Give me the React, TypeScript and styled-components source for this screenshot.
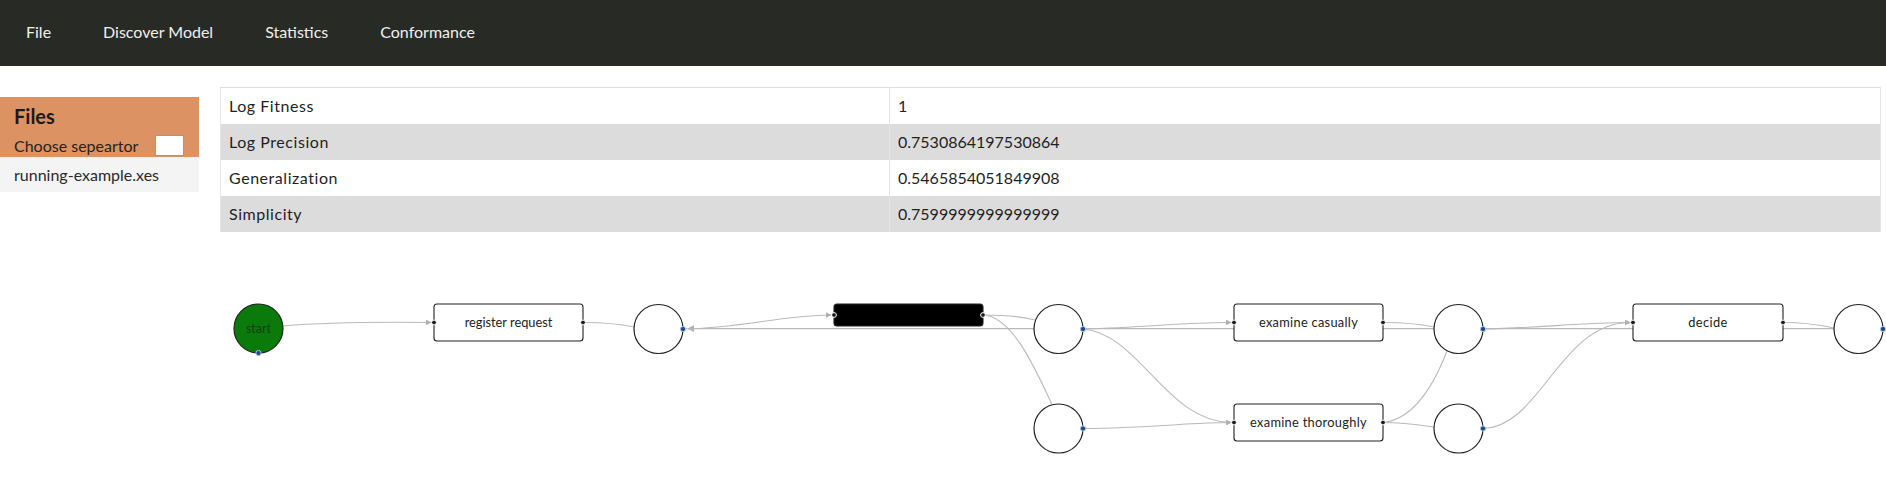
import React from "react";
import styled, { createGlobalStyle } from "styled-components";

const GlobalStyle = createGlobalStyle`
  html, body {
    margin: 0;
    padding: 0;
    height: 484px;
    overflow: hidden;
    background: #ffffff;
    font-family: Lato, "Open Sans", "Liberation Sans", sans-serif;
    color: #222;
  }
  * { box-sizing: border-box; }
`;

const Page = styled.div`
  width: 1886px;
  height: 484px;
  display: flex;
  flex-direction: column;
`;

const NavBar = styled.nav`
  height: 66px;
  background: #282a26;
  display: flex;
  align-items: center;
  padding-left: 0;
  flex-shrink: 0;
`;

const NavItem = styled.a`
  color: #f0f0ee;
  font-size: 16px;
  padding: 0 26px 0 26px;
  cursor: pointer;
  line-height: 20px;
  margin-top: -2px;
`;

const Content = styled.div`
  flex: 1;
  display: flex;
  align-items: flex-start;
  min-height: 0;
`;

const Sidebar = styled.aside`
  width: 199px;
  margin-top: 31px;
  flex-shrink: 0;
`;

const FilesPanel = styled.div`
  background: #dd9263;
  padding: 6px 12px 1px 14px;
`;

const PanelTitle = styled.h3`
  margin: 0;
  font-size: 20px;
  font-weight: 700;
  line-height: 26px;
  color: #1e1a17;
`;

const SepRow = styled.div`
  height: 27px;
  display: flex;
  align-items: flex-end;
  justify-content: space-between;
  font-size: 16px;
  line-height: 20px;
  color: #2a2320;
`;

const SepInput = styled.input`
  width: 29px;
  height: 21px;
  border: 1px solid #9a9a9a;
  background: #fff;
  padding: 0;
  margin: 0 3px 0 0;
`;

const FileItem = styled.div`
  height: 35px;
  line-height: 35px;
  padding-left: 14px;
  background: #f4f4f4;
  font-size: 16px;
  color: #2a2a2a;
`;

const Main = styled.main`
  flex: 1;
  margin-left: 21px;
  margin-right: 5px;
  display: flex;
  flex-direction: column;
  min-width: 0;
`;

const MetricsTable = styled.table`
  margin-top: 21px;
  width: 100%;
  border-collapse: collapse;
  border-top: 1px solid #dedede;
  border-left: 1px solid #e4e4e4;
  border-right: 1px solid #e4e4e4;
  font-size: 16px;
`;

const Row = styled.tr<{ $shaded: boolean }>`
  height: 36px;
  background: ${(p) => (p.$shaded ? "#dcdcdc" : "#ffffff")};
`;

const LabelCell = styled.td`
  width: 669px;
  padding: 0 8px;
  border-right: 1px solid #e4e4e4;
  color: #1f1f1f;
  letter-spacing: 0.55px;
`;

const ValueCell = styled.td`
  padding: 0 8px;
  color: #1f1f1f;
`;

const GraphView = styled.div`
  height: 252px;
  position: relative;
`;

const GraphSvg = styled.svg`
  display: block;
  overflow: visible;
  font-family: Lato, "Open Sans", "Liberation Sans", sans-serif;
`;

const metrics = [
  { label: "Log Fitness", value: "1" },
  { label: "Log Precision", value: "0.7530864197530864" },
  { label: "Generalization", value: "0.5465854051849908" },
  { label: "Simplicity", value: "0.7599999999999999" },
];

const EDGE = "#b9b9b9";

type Place = { x: number; y: number };
const R = 24.5;
const places: Place[] = [
  { x: 658.5, y: 329 },
  { x: 1058.5, y: 329 },
  { x: 1058.5, y: 428.5 },
  { x: 1458.5, y: 329 },
  { x: 1458.5, y: 428.5 },
  { x: 1858.5, y: 329 },
];

type Trans = { x: number; y: number; w: number; h: number; label?: string; silent?: boolean; ls?: number };
const transitions: Trans[] = [
  { x: 434, y: 304, w: 149, h: 37, label: "register request", ls: 0 },
  { x: 834, y: 304, w: 149, h: 22, silent: true },
  { x: 1234, y: 304, w: 149, h: 37, label: "examine casually", ls: 0.3 },
  { x: 1234, y: 404, w: 149, h: 37, label: "examine thoroughly", ls: 0.3 },
  { x: 1633, y: 304, w: 150, h: 37, label: "decide", ls: 0.4 },
];

const edges: { d: string; arrow?: boolean; w?: number }[] = [
  { d: "M1886,328.6 L688,328.6", arrow: true, w: 1.4 },
  { d: "M283,326 C330,322 390,322 431,322.5", arrow: true },
  { d: "M583,322.5 C605,322.5 620,324 634,327" },
  { d: "M683,329 C740,328 785,315 831,315", arrow: true },
  { d: "M983,315 C1005,315 1020,316 1035,320" },
  { d: "M983,315 C1012,316 1035,368 1052,404.5" },
  { d: "M1083,329 C1150,327 1190,322 1231,322.5", arrow: true },
  { d: "M1083,329 C1140,334 1165,421 1231,422.5", arrow: true },
  { d: "M1083,428.5 C1150,428 1190,422.5 1231,422.5", arrow: true },
  { d: "M1383,322.5 C1405,322.5 1420,324 1434,327" },
  { d: "M1383,422.5 C1408,420 1430,395 1447,351" },
  { d: "M1383,422.5 C1405,422.5 1420,425 1434,427" },
  { d: "M1483,329 C1540,328 1580,322.5 1630,322.5", arrow: true },
  { d: "M1483,428.5 C1540,428 1560,322.5 1630,322.5", arrow: true },
  { d: "M1783,322.5 C1805,322.5 1820,325 1834,328" },
];

const Dot = ({ x, y, blue }: { x: number; y: number; blue?: boolean }) => (
  <circle
    cx={x}
    cy={y}
    r={blue ? 2.6 : 2.4}
    fill={blue ? "#24478a" : "#1a1a1a"}
    stroke={blue ? "#a8c4ea" : "#ffffff"}
    strokeWidth={1}
  />
);

const PetriNet = () => (
  <GraphSvg width="100%" height="252" viewBox="220 232 1661 252" preserveAspectRatio="xMinYMin meet">
    <defs>
      <marker id="arr" viewBox="0 0 10 10" refX="9" refY="5" markerWidth="5" markerHeight="5" orient="auto">
        <path d="M0,0 L10,5 L0,10 z" fill="#b0b0b0" />
      </marker>
    </defs>
    {edges.map((e, i) => (
      <path
        key={i}
        d={e.d}
        fill="none"
        stroke={EDGE}
        strokeWidth={e.w ?? 1.1}
        markerEnd={e.arrow ? "url(#arr)" : undefined}
      />
    ))}
    <circle cx={258.5} cy={328.5} r={R} fill="#0a7a0a" stroke="#1c2a1c" strokeWidth={1.2} />
    <text x={258.5} y={333} textAnchor="middle" fontSize="12.5" fill="#173f17">
      start
    </text>
    <Dot x={258.5} y={353} blue />
    {places.map((p, i) => (
      <g key={i}>
        <circle cx={p.x} cy={p.y} r={R} fill="#ffffff" stroke="#222" strokeWidth={1.2} />
        <Dot x={p.x + R} y={p.y} blue />
      </g>
    ))}
    {transitions.map((t, i) => (
      <g key={i}>
        <rect
          x={t.x}
          y={t.y}
          width={t.w}
          height={t.h}
          rx={3}
          fill={t.silent ? "#000000" : "#ffffff"}
          stroke="#222"
          strokeWidth={1.1}
        />
        {t.label && (
          <text
            x={t.x + t.w / 2}
            y={t.y + t.h / 2 + 4.5}
            textAnchor="middle"
            fontSize="12.8"
            fill="#222"
            letterSpacing={t.ls}
          >
            {t.label}
          </text>
        )}
        <Dot x={t.x} y={t.y + t.h / 2} />
        <Dot x={t.x + t.w} y={t.y + t.h / 2} />
      </g>
    ))}
  </GraphSvg>
);

export default function App() {
  return (
    <>
      <GlobalStyle />
      <Page>
        <NavBar>
          <NavItem>File</NavItem>
          <NavItem>Discover Model</NavItem>
          <NavItem>Statistics</NavItem>
          <NavItem>Conformance</NavItem>
        </NavBar>
        <Content>
          <Sidebar>
            <FilesPanel>
              <PanelTitle>Files</PanelTitle>
              <SepRow>
                <span>Choose sepeartor</span>
                <SepInput type="text" />
              </SepRow>
            </FilesPanel>
            <FileItem>running-example.xes</FileItem>
          </Sidebar>
          <Main>
            <MetricsTable>
              <tbody>
                {metrics.map((m, i) => (
                  <Row key={m.label} $shaded={i % 2 === 1}>
                    <LabelCell>{m.label}</LabelCell>
                    <ValueCell>{m.value}</ValueCell>
                  </Row>
                ))}
              </tbody>
            </MetricsTable>
            <GraphView>
              <PetriNet />
            </GraphView>
          </Main>
        </Content>
      </Page>
    </>
  );
}
